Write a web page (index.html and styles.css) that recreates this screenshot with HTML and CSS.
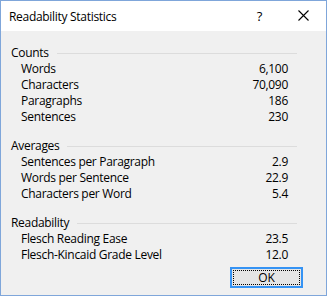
FILE: index.html
```html
<!DOCTYPE html>
<html>
<head>
<meta charset="utf-8">
<link rel="stylesheet" href="styles.css">
</head>
<body>
<div class="dialog">
  <div class="titlebar">
    <span class="title">Readability Statistics</span>
    <span class="help">?</span>
    <svg class="close" width="11" height="11" viewBox="0 0 11 11"><path d="M0.5 0.5 L10.5 10.5 M10.5 0.5 L0.5 10.5" stroke="#000" stroke-width="1.1" fill="none"/></svg>
  </div>
  <div class="content">
    <div class="section">
      <div class="head"><span>Counts</span><span class="rule"></span></div>
      <div class="row"><span>Words</span><span>6,100</span></div>
      <div class="row"><span>Characters</span><span>70,090</span></div>
      <div class="row"><span>Paragraphs</span><span>186</span></div>
      <div class="row"><span>Sentences</span><span>230</span></div>
    </div>
    <div class="section">
      <div class="head"><span>Averages</span><span class="rule"></span></div>
      <div class="row"><span>Sentences per Paragraph</span><span>2.9</span></div>
      <div class="row"><span>Words per Sentence</span><span>22.9</span></div>
      <div class="row"><span>Characters per Word</span><span>5.4</span></div>
    </div>
    <div class="section">
      <div class="head"><span>Readability</span><span class="rule"></span></div>
      <div class="row"><span>Flesch Reading Ease</span><span>23.5</span></div>
      <div class="row"><span>Flesch-Kincaid Grade Level</span><span>12.0</span></div>
    </div>
    <div class="buttons">
      <button class="ok"><span class="focus">OK</span></button>
    </div>
  </div>
</div>
</body>
</html>
```
FILE: styles.css
```css
html, body {
  margin: 0;
  padding: 0;
}
body {
  font-family: "Segoe UI", "Open Sans", "Noto Sans", sans-serif;
  font-size: 12px;
  letter-spacing: -0.3px;
  color: #000;
}
.dialog {
  width: 327px;
  height: 296px;
  box-sizing: border-box;
  border: 1px solid #7fa6da;
  background: #f0f0f0;
  display: flex;
  flex-direction: column;
}
.titlebar {
  height: 30px;
  background: #fff;
  display: flex;
  align-items: center;
  flex: none;
}
.title {
  margin-left: 8px;
  font-size: 12px;
  flex: 1;
}
.help {
  font-size: 13px;
  margin-right: 36px;
}
.close {
  margin-right: 17px;
  margin-top: -2px;
}
.content {
  padding: 14px 38px 0 10px;
}
.section {
  margin-bottom: 13px;
}
.head {
  display: flex;
  align-items: center;
  line-height: 16px;
}
.rule {
  flex: 1;
  height: 1px;
  background: #dcdcdc;
  margin-left: 8px;
  margin-right: -9px;
}
.row {
  display: flex;
  justify-content: space-between;
  line-height: 16px;
  padding-left: 10px;
}
.buttons {
  display: flex;
  justify-content: flex-end;
  margin-top: -9px;
  margin-right: -15px;
}
.ok {
  width: 73px;
  height: 21px;
  box-sizing: border-box;
  border: 2px solid #3593f4;
  background: #e5e5e5;
  padding: 1px;
  margin: 0;
  font: inherit;
  display: flex;
}
.focus {
  flex: 1;
  border: 1px dotted #000;
  display: flex;
  align-items: center;
  justify-content: center;
  line-height: 13px;
}
```
